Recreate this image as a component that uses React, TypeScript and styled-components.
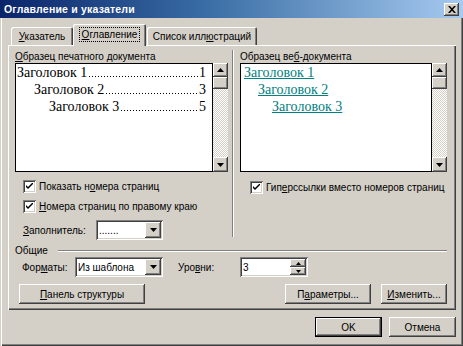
import styled, { createGlobalStyle } from "styled-components";

const GlobalStyle = createGlobalStyle`
  html, body {
    margin: 0;
    padding: 0;
    background: #d4d0c8;
  }
  body {
    font-family: "Liberation Sans", Arial, sans-serif;
    font-size: 10px;
    color: #000000;
  }
  * {
    box-sizing: border-box;
  }
`;

const raised =
  "box-shadow: inset -1px -1px #404040, inset 1px 1px #ffffff, inset -2px -2px #808080, inset 2px 2px #d4d0c8;";
const sunken =
  "box-shadow: inset 1px 1px #808080, inset -1px -1px #ffffff, inset 2px 2px #404040, inset -2px -2px #d4d0c8;";

const Window = styled.div`
  width: 463px;
  height: 346px;
  display: flex;
  flex-direction: column;
  background: #d4d0c8;
  overflow: hidden;
`;

const TitleBar = styled.div`
  height: 18px;
  flex-shrink: 0;
  display: flex;
  align-items: center;
  justify-content: space-between;
  padding: 0 4px 0 4px;
  background: linear-gradient(90deg, #0a246a 0%, #3a6ea5 45%, #a6caf0 100%);
  color: #ffffff;
  font-weight: bold;
  font-size: 10.5px;
  letter-spacing: 0.2px;
`;

const CloseButton = styled.div`
  width: 15px;
  height: 13px;
  margin-top: 1px;
  display: flex;
  align-items: center;
  justify-content: center;
  background: #d4d0c8;
  ${raised}
`;

const Client = styled.div`
  flex: 1;
  display: flex;
  flex-direction: column;
  padding: 6px 7px 0 8px;
  box-shadow: inset 1px 0 #d4d0c8, inset 2px 0 #ffffff, inset -1px -1px #404040,
    inset -2px -2px #808080;
`;

const TabRow = styled.div`
  height: 21px;
  display: flex;
  align-items: flex-end;
  padding-left: 3px;
`;

const Tab = styled.div<{ $w: number; $active?: boolean; $gap?: number }>`
  position: relative;
  z-index: ${({ $active }) => ($active ? 1 : 0)};
  width: ${({ $w }) => $w}px;
  height: ${({ $active }) => ($active ? 22 : 18)}px;
  margin-bottom: ${({ $active }) => ($active ? -1 : 0)}px;
  margin-left: ${({ $gap }) => $gap ?? 0}px;
  display: flex;
  align-items: center;
  justify-content: center;
  padding-bottom: ${({ $active }) => ($active ? 2 : 0)}px;
  background: #d4d0c8;
  border-radius: 2px 2px 0 0;
  box-shadow: inset 1px 1px #ffffff, inset -1px 0 #404040, inset -2px 0 #808080;
  white-space: nowrap;
`;

const FocusText = styled.span`
  outline: 1px dotted #000000;
  outline-offset: 0;
  padding: 0 2px;
  line-height: 13px;
`;

const Panel = styled.div`
  height: 265px;
  display: flex;
  flex-direction: column;
  padding: 5px 9px 0 7px;
  background: #d4d0c8;
  box-shadow: inset 1px 1px #ffffff, inset -1px -1px #404040, inset -2px -2px #808080;
`;

const Columns = styled.div`
  display: flex;
  align-items: stretch;
`;

const Column = styled.div<{ $w: number }>`
  width: ${({ $w }) => $w}px;
  flex-shrink: 0;
  display: flex;
  flex-direction: column;
`;

const VSeparator = styled.div`
  width: 2px;
  flex-shrink: 0;
  margin: 0 6px 3px 4px;
  border-left: 1px solid #808080;
  border-right: 1px solid #ffffff;
`;

const SectionLabel = styled.div`
  height: 13px;
  line-height: 13px;
  white-space: nowrap;
`;

const Preview = styled.div`
  height: 109px;
  display: flex;
`;

const PreviewBox = styled.div<{ $web?: boolean }>`
  flex: 1;
  min-width: 0;
  background: #ffffff;
  border: 1px solid #000000;
  padding: 0 6px 0 ${({ $web }) => ($web ? 3 : 1)}px;
  font-family: "Liberation Serif", "Times New Roman", serif;
  font-size: 14px;
  line-height: 17px;
`;

const TocLine = styled.div<{ $indent: number }>`
  display: flex;
  align-items: baseline;
  padding-left: ${({ $indent }) => $indent}px;
  white-space: nowrap;
`;

const Leader = styled.span`
  flex: 1;
  align-self: stretch;
  margin: 0 1px 0 2px;
  background-image: linear-gradient(90deg, #000000 1px, transparent 1px);
  background-size: 3px 1px;
  background-repeat: repeat-x;
  background-position: left bottom 4px;
`;

const WebLine = styled.div<{ $indent: number }>`
  padding-left: ${({ $indent }) => $indent}px;
  color: #008080;
  white-space: nowrap;
`;

const LinkText = styled.span`
  text-decoration: underline;
`;

const Scrollbar = styled.div`
  width: 15px;
  flex-shrink: 0;
  display: flex;
  flex-direction: column;
  background-color: #ffffff;
  background-image: repeating-conic-gradient(#d4d0c8 0 25%, #ffffff 0 50%);
  background-size: 2px 2px;
`;

const ScrollButton = styled.div<{ $h: number }>`
  height: ${({ $h }) => $h}px;
  display: flex;
  align-items: center;
  justify-content: center;
  background: #d4d0c8;
  ${raised}
`;

const ScrollTrack = styled.div`
  flex: 1;
`;

const CheckRow = styled.div<{ $top: number; $left: number }>`
  height: 13px;
  display: flex;
  align-items: center;
  gap: 3px;
  margin-top: ${({ $top }) => $top}px;
  margin-left: ${({ $left }) => $left}px;
  white-space: nowrap;
`;

const CheckBox = styled.div`
  width: 13px;
  height: 13px;
  flex-shrink: 0;
  display: flex;
  align-items: center;
  justify-content: center;
  background: #ffffff;
  ${sunken}
`;

const FieldRow = styled.div<{ $top: number; $left: number }>`
  display: flex;
  align-items: center;
  margin-top: ${({ $top }) => $top}px;
  margin-left: ${({ $left }) => $left}px;
  white-space: nowrap;
`;

const FieldLabel = styled.span<{ $w: number; $gap?: number }>`
  width: ${({ $w }) => $w}px;
  margin-left: ${({ $gap }) => $gap ?? 0}px;
`;

const Combo = styled.div<{ $w: number }>`
  width: ${({ $w }) => $w}px;
  height: 20px;
  display: flex;
  align-items: stretch;
  padding: 2px;
  background: #ffffff;
  ${sunken}
`;

const ComboText = styled.div`
  flex: 1;
  display: flex;
  align-items: center;
  padding-left: 1px;
  overflow: hidden;
`;

const ComboButton = styled.div`
  width: 16px;
  display: flex;
  align-items: center;
  justify-content: center;
  background: #d4d0c8;
  ${raised}
`;

const SpinButtons = styled.div`
  width: 16px;
  display: flex;
  flex-direction: column;
`;

const SpinHalf = styled.div`
  flex: 1;
  display: flex;
  align-items: center;
  justify-content: center;
  background: #d4d0c8;
  ${raised}
`;

const GroupHeader = styled.div`
  height: 13px;
  margin-top: 4px;
  display: flex;
  align-items: center;
`;

const GroupLine = styled.div`
  flex: 1;
  height: 2px;
  margin-left: 10px;
  border-top: 1px solid #808080;
  border-bottom: 1px solid #ffffff;
`;

const ButtonRow = styled.div`
  display: flex;
  margin-top: 7px;
  margin-left: 4px;
`;

const Spacer = styled.div`
  flex: 1;
`;

const Button = styled.div<{ $w: number; $gap?: number; $default?: boolean }>`
  width: ${({ $w }) => $w}px;
  height: 20px;
  margin-left: ${({ $gap }) => $gap ?? 0}px;
  display: flex;
  align-items: center;
  justify-content: center;
  background: #d4d0c8;
  white-space: nowrap;
  ${({ $default }) =>
    $default
      ? "box-shadow: inset 0 0 0 1px #000000, inset -2px -2px #404040, inset 2px 2px #ffffff, inset -3px -3px #808080;"
      : raised}
`;

const Footer = styled.div`
  display: flex;
  justify-content: flex-end;
  padding-top: 7px;
`;

const ArrowDown = () => (
  <svg width="7" height="4" viewBox="0 0 7 4">
    <path d="M0 0h7L3.5 4z" fill="#000" />
  </svg>
);

const ArrowUp = ({ small }: { small?: boolean }) => (
  <svg width={small ? 5 : 7} height={small ? 3 : 4} viewBox="0 0 7 4">
    <path d="M0 4h7L3.5 0z" fill="#000" />
  </svg>
);

const ArrowDownSmall = () => (
  <svg width="5" height="3" viewBox="0 0 7 4">
    <path d="M0 0h7L3.5 4z" fill="#000" />
  </svg>
);

const Check = () => (
  <svg width="7" height="7" viewBox="0 0 7 7">
    <path d="M0 2l2 2l5-5v2l-5 5l-2-2z" fill="#000" />
  </svg>
);

const CloseIcon = () => (
  <svg width="8" height="7" viewBox="0 0 8 7">
    <path d="M0 0h2l2 2.3L6 0h2L5 3.5L8 7H6L4 4.7L2 7H0l3-3.5z" fill="#000" />
  </svg>
);

const printLines = [
  { text: "Заголовок 1", page: "1", indent: 0 },
  { text: "Заголовок 2", page: "3", indent: 17 },
  { text: "Заголовок 3", page: "5", indent: 32 },
];

const webLines = [
  { text: "Заголовок 1", indent: 0 },
  { text: "Заголовок 2", indent: 14 },
  { text: "Заголовок 3", indent: 28 },
];

function VScroll() {
  return (
    <Scrollbar>
      <ScrollButton $h={14}>
        <ArrowUp />
      </ScrollButton>
      <ScrollButton $h={12} />
      <ScrollTrack />
      <ScrollButton $h={15}>
        <ArrowDown />
      </ScrollButton>
    </Scrollbar>
  );
}

export default function App() {
  return (
    <>
      <GlobalStyle />
      <Window>
        <TitleBar>
          <span>Оглавление и указатели</span>
          <CloseButton>
            <CloseIcon />
          </CloseButton>
        </TitleBar>
        <Client>
          <TabRow>
            <Tab $w={62}>
              <span>
                <u>У</u>казатель
              </span>
            </Tab>
            <Tab $w={73} $active>
              <FocusText>
                <u>О</u>главление
              </FocusText>
            </Tab>
            <Tab $w={110} $gap={1}>
              <span>
                Список илл<u>ю</u>страций
              </span>
            </Tab>
          </TabRow>
          <Panel>
            <Columns>
              <Column $w={213}>
                <SectionLabel>
                  <u>О</u>бразец печатного документа
                </SectionLabel>
                <Preview>
                  <PreviewBox>
                    {printLines.map((line) => (
                      <TocLine key={line.text} $indent={line.indent}>
                        <span>{line.text}</span>
                        <Leader />
                        <span>{line.page}</span>
                      </TocLine>
                    ))}
                  </PreviewBox>
                  <VScroll />
                </Preview>
                <CheckRow $top={8} $left={8}>
                  <CheckBox>
                    <Check />
                  </CheckBox>
                  <span>
                    Показать н<u>о</u>мера страниц
                  </span>
                </CheckRow>
                <CheckRow $top={7} $left={8}>
                  <CheckBox>
                    <Check />
                  </CheckBox>
                  <span>
                    <u>Н</u>омера страниц по правому краю
                  </span>
                </CheckRow>
                <FieldRow $top={7} $left={8}>
                  <FieldLabel $w={73}>
                    <u>З</u>аполнитель:
                  </FieldLabel>
                  <Combo $w={67}>
                    <ComboText>.......</ComboText>
                    <ComboButton>
                      <ArrowDown />
                    </ComboButton>
                  </Combo>
                </FieldRow>
              </Column>
              <VSeparator />
              <Column $w={207}>
                <SectionLabel>
                  Образец ве<u>б</u>-документа
                </SectionLabel>
                <Preview>
                  <PreviewBox $web>
                    {webLines.map((line) => (
                      <WebLine key={line.text} $indent={line.indent}>
                        <LinkText>{line.text}</LinkText>
                      </WebLine>
                    ))}
                  </PreviewBox>
                  <VScroll />
                </Preview>
                <CheckRow $top={9} $left={10}>
                  <CheckBox>
                    <Check />
                  </CheckBox>
                  <span>
                    Гип<u>е</u>рссылки вместо номеров страниц
                  </span>
                </CheckRow>
              </Column>
            </Columns>
            <GroupHeader>
              <span>Общие</span>
              <GroupLine />
            </GroupHeader>
            <FieldRow $top={0} $left={7}>
              <FieldLabel $w={53}>
                Фор<u>м</u>аты:
              </FieldLabel>
              <Combo $w={88}>
                <ComboText>Из шаблона</ComboText>
                <ComboButton>
                  <ArrowDown />
                </ComboButton>
              </Combo>
              <FieldLabel $w={62} $gap={15}>
                Уро<u>в</u>ни:
              </FieldLabel>
              <Combo $w={68}>
                <ComboText>3</ComboText>
                <SpinButtons>
                  <SpinHalf>
                    <ArrowUp small />
                  </SpinHalf>
                  <SpinHalf>
                    <ArrowDownSmall />
                  </SpinHalf>
                </SpinButtons>
              </Combo>
            </FieldRow>
            <ButtonRow>
              <Button $w={126}>
                <span>
                  <u>П</u>анель структуры
                </span>
              </Button>
              <Spacer />
              <Button $w={86}>
                <span>
                  П<u>а</u>раметры...
                </span>
              </Button>
              <Button $w={66} $gap={10}>
                <span>
                  <u>И</u>зменить...
                </span>
              </Button>
            </ButtonRow>
          </Panel>
          <Footer>
            <Button $w={67} $default>
              OK
            </Button>
            <Button $w={67} $gap={7}>
              Отмена
            </Button>
          </Footer>
        </Client>
      </Window>
    </>
  );
}
